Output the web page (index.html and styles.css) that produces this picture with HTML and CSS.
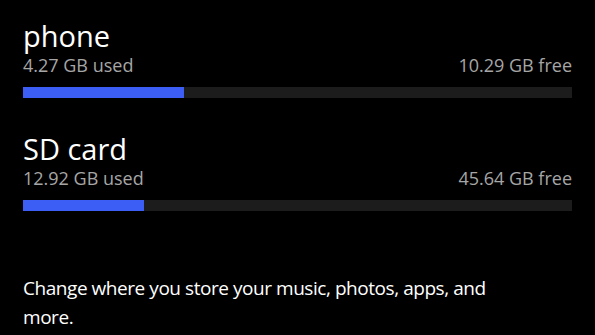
FILE: index.html
```html
<!DOCTYPE html>
<html>
<head>
<meta charset="utf-8">
<link rel="stylesheet" href="styles.css">
</head>
<body>
<div class="page">
  <section class="storage">
    <div class="name">phone</div>
    <div class="stats"><span>4.27 GB used</span><span>10.29 GB free</span></div>
    <div class="track"><div class="fill" style="width:29.3%"></div></div>
  </section>
  <section class="storage sd">
    <div class="name">SD card</div>
    <div class="stats"><span>12.92 GB used</span><span>45.64 GB free</span></div>
    <div class="track"><div class="fill" style="width:22%"></div></div>
  </section>
  <p class="note">Change where you store your music, photos, apps, and more.</p>
</div>
</body>
</html>
```
FILE: styles.css
```css
html, body {
  margin: 0;
  padding: 0;
  background: #000;
  width: 595px;
  height: 335px;
  overflow: hidden;
}
.page {
  padding: 18px 23px 0 23px;
  font-family: "Open Sans", "Noto Sans", sans-serif;
  color: #fff;
}
.storage {
  display: flex;
  flex-direction: column;
}
.sd {
  margin-top: 33px;
}
.name {
  font-size: 29px;
  line-height: 36px;
  color: #fff;
}
.stats {
  display: flex;
  justify-content: space-between;
  font-size: 18px;
  line-height: 22px;
  color: #a6a6a6;
}
.track {
  margin-top: 11px;
  height: 11px;
  background: #1c1c1c;
}
.fill {
  height: 100%;
  background: #3d5ef5;
}
.note {
  margin: 63px 0 0 0;
  width: 480px;
  font-size: 19px;
  line-height: 29px;
  letter-spacing: -0.45px;
  color: #fff;
}
```
